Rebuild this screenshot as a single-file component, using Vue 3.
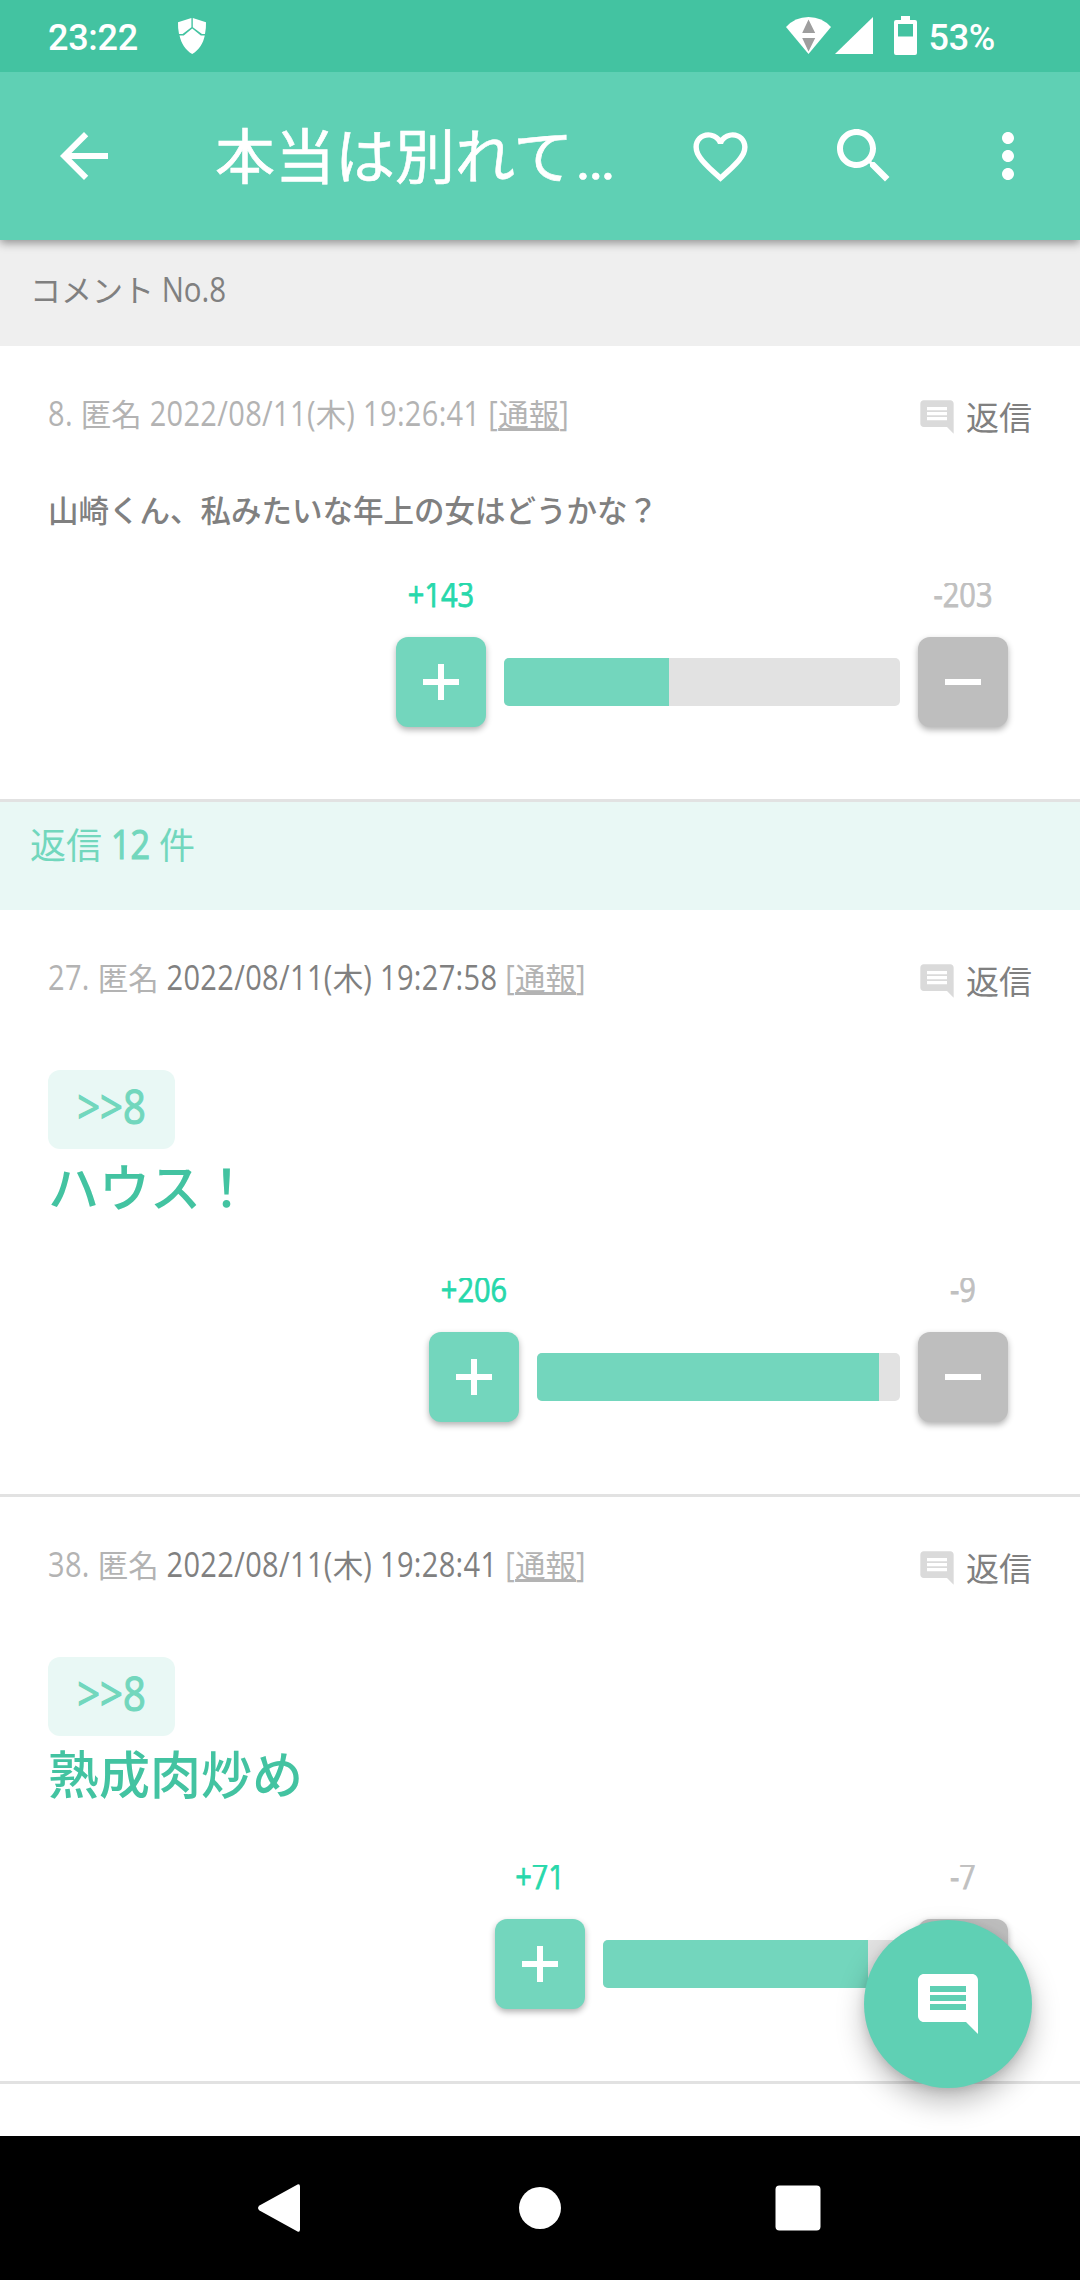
<template>
  <div class="screen">
    <div class="status-bar">
      <span class="clock">23:22</span>
      <svg class="shield" viewBox="0 0 28 36">
        <path d="M13.4 0L0 4.3Q-.2 10.500 1 16H4.600L13.400 9.200ZM14.800 0L28 4.300Q28.200 10.500 27 16H24L14.800 9.200Z" />
        <path d="M14.200 10.600L5.800 17.400H1.500C3.200 25.200 7.400 32 14.200 36C21 32 25.200 25.200 26.800 17.400H22.800Z" />
      </svg>
      <div class="status-right">
        <svg class="wifi" viewBox="0 0 45 37">
          <path d="M0 10Q9 0 22.500 0T45 10L22.500 37Z" />
          <path d="M22.500 2.500L29.200 16H16.200ZM16.200 21H29.200L22.500 34.500Z" fill="#9e9e9e" />
        </svg>
        <svg class="signal" viewBox="0 0 38 37">
          <path d="M38 0V37H0Z" />
        </svg>
        <svg class="battery" viewBox="0 0 23 39">
          <path fill-rule="evenodd" d="M7 0H16V4H21Q23 4 23 6V37Q23 39 21 39H2Q0 39 0 37V6Q0 4 2 4H7ZM4 8V20.500H19V8Z" />
        </svg>
        <span class="percent">53%</span>
      </div>
    </div>

    <header class="app-bar">
      <svg class="icon back" viewBox="0 0 24 24">
        <path d="M20 11H7.830l5.590-5.590L12 4l-8 8 8 8 1.410-1.410L7.830 13H20v-2z" />
      </svg>
      <h1>本当は別れて<span class="dots">…</span></h1>
      <svg class="heart" viewBox="0 0 24 24">
        <path d="M16.500 3c-1.740 0-3.410.81-4.500 2.090C10.910 3.810 9.240 3 7.500 3 4.420 3 2 5.420 2 8.500c0 3.780 3.400 6.860 8.550 11.540L12 21.350l1.450-1.320C18.600 15.360 22 12.280 22 8.500 22 5.420 19.580 3 16.500 3zm-4.400 15.550l-.1.100-.1-.1C7.140 14.240 4 11.390 4 8.500 4 6.500 5.500 5 7.500 5c1.540 0 3.040.99 3.570 2.360h1.870C13.460 5.990 14.960 5 16.500 5c2 0 3.500 1.500 3.500 3.500 0 2.890-3.140 5.740-7.900 10.050z" />
      </svg>
      <svg class="icon search" viewBox="0 0 24 24">
        <path d="M15.500 14h-.79l-.28-.27C15.410 12.590 16 11.110 16 9.500 16 5.910 13.090 3 9.500 3S3 5.910 3 9.500 5.910 16 9.500 16c1.610 0 3.090-.59 4.230-1.570l.27.28v.79l5 4.990L20.490 19l-4.990-5zm-6 0C7.010 14 5 11.990 5 9.500S7.010 5 9.500 5 14 7.010 14 9.500 11.990 14 9.500 14z" />
      </svg>
      <svg class="icon more" viewBox="0 0 24 24">
        <path d="M12 8c1.100 0 2-.9 2-2s-.9-2-2-2-2 .9-2 2 .9 2 2 2zm0 2c-1.100 0-2 .9-2 2s.9 2 2 2 2-.9 2-2-.9-2-2-2zm0 6c-1.100 0-2 .9-2 2s.9 2 2 2 2-.9 2-2-.9-2-2-2z" />
      </svg>
    </header>

    <div class="section">コメント<span class="n"> No.8</span></div>

    <main>
      <template v-for="(c, i) in comments" :key="c.id">
        <article class="comment">
          <div class="comment-head">
            <div class="meta">
              <span class="n">{{ c.id + '. ' }}</span>匿名<span class="date" :class="{ dark: i > 0 }"><span class="n">{{ ' ' + c.date + '(' }}</span>木<span class="n">{{ ') ' + c.time }}</span></span><span class="n">{{ ' [' }}</span><a class="report">通報</a><span class="n">]</span>
            </div>
            <a class="reply">
              <svg viewBox="0 0 24 24">
                <path :d="commentPath" />
              </svg>
              <span>返信</span>
            </a>
          </div>

          <div v-if="c.replyTo" class="anchor"><span class="n">>>{{ c.replyTo }}</span></div>
          <p class="body" :class="{ large: c.replyTo }">{{ c.text }}</p>

          <div class="votes">
            <div class="vote">
              <div class="count plus-count"><span class="n">+{{ c.plus }}</span></div>
              <button class="vote-btn plus">
                <svg viewBox="0 0 36 36"><path d="M15 0h6v15h15v6H21v15h-6V21H0v-6h15z" /></svg>
              </button>
            </div>
            <div class="bar" :style="{ width: c.bar + 'px' }">
              <div class="fill" :style="{ width: c.fill + 'px' }"></div>
            </div>
            <div class="vote">
              <div class="count minus-count"><span class="n">-{{ c.minus }}</span></div>
              <button class="vote-btn minus">
                <svg viewBox="0 0 36 36"><path d="M0 15h36v6H0z" /></svg>
              </button>
            </div>
          </div>
        </article>
        <div v-if="i === 0" class="section replies">返信<span class="n">{{ ' 12 ' }}</span>件</div>
      </template>
    </main>

    <button class="fab">
      <svg viewBox="0 0 24 24"><path :d="commentPath" /></svg>
    </button>

    <nav class="nav-bar">
      <svg viewBox="0 0 48 48"><path d="M39.500 .5Q42 -.5 42 2.500V45.500Q42 48.500 39.500 47.500L1.500 26.500Q-1.500 24 1.500 21.500Z" /></svg>
      <svg viewBox="0 0 48 48"><circle cx="24" cy="24" r="21" /></svg>
      <svg viewBox="0 0 48 48"><rect x="1.500" y="1.500" width="45" height="45" rx="4" /></svg>
    </nav>
  </div>
</template>

<script setup>
const commentPath =
  'M21.990 4c0-1.100-.89-2-1.990-2H4c-1.100 0-2 .9-2 2v12c0 1.100.9 2 2 2h14l4 4-.01-18zM18 14H6v-2h12v2zm0-3H6V9h12v2zm0-3H6V6h12v2z'

// bar and fill are pixel widths, popular comments get a longer bar
const comments = [
  { id: 8, date: '2022/08/11', time: '19:26:41', text: '山崎くん、私みたいな年上の女はどうかな？', plus: 143, minus: 203, bar: 396, fill: 165 },
  { id: 27, date: '2022/08/11', time: '19:27:58', replyTo: 8, text: 'ハウス！', plus: 206, minus: 9, bar: 363, fill: 342 },
  { id: 38, date: '2022/08/11', time: '19:28:41', replyTo: 8, text: '熟成肉炒め', plus: 71, minus: 7, bar: 297, fill: 265 },
]
</script>

<style>
body {
  margin: 0;
  background: #fff;
}
</style>

<style scoped>
.screen {
  position: relative;
  display: flex;
  flex-direction: column;
  width: 1080px;
  height: 2280px;
  overflow: hidden;
  background: #fff;
  font-family: 'Noto Sans CJK JP', sans-serif;
  color: #808080;
}

svg {
  display: block;
  fill: currentColor;
  flex: none;
  overflow: visible;
}

/* tall latin glyphs, stretched up from the baseline */
.n {
  display: inline-block;
  font-family: 'Open Sans', 'Noto Sans', sans-serif;
  font-size: 0.95em;
  white-space: pre;
  transform: scaleY(1.18);
  transform-origin: 0 calc(50% + 0.388em);
}

.status-bar {
  position: relative;
  z-index: 2;
  display: flex;
  align-items: flex-start;
  height: 72px;
  flex: none;
  box-sizing: border-box;
  padding: 17px 85px 0 48px;
  background: #43c3a1;
  color: #fff;
  font: 500 36px/42px Roboto, sans-serif;
  letter-spacing: -0.3px;
}

.shield {
  width: 28px;
  height: 36px;
  margin: 1px 0 0 40px;
}

.status-right {
  display: flex;
  margin-left: auto;
}

.wifi {
  width: 45px;
  height: 37px;
}

.signal {
  width: 38px;
  height: 37px;
  margin: 0 0 0 4px;
}

.battery {
  width: 23px;
  height: 39px;
  margin: -1px 0 0 21px;
}

.percent {
  margin-left: 11px;
}

.app-bar {
  position: relative;
  z-index: 1;
  display: flex;
  align-items: center;
  height: 168px;
  flex: none;
  background: #5fd0b4;
  color: #fff;
  box-shadow: 0 3px 9px rgba(0, 0, 0, 0.4);
}

.icon {
  width: 72px;
  height: 72px;
}

.back {
  margin-left: 48px;
}

.app-bar h1 {
  width: 401px;
  margin: 0 0 0 95px;
  font-size: 60px;
  font-weight: 400;
  line-height: 80px;
  white-space: nowrap;
  -webkit-text-stroke: 0.6px currentColor;
}

.dots {
  margin-left: 2px;
  font-family: Roboto, sans-serif;
}

.heart {
  width: 65px;
  height: 65px;
  margin-left: 72px;
}

.search {
  margin-left: 75px;
}

.more {
  margin-left: 72px;
}

.section {
  height: 106px;
  flex: none;
  box-sizing: border-box;
  padding: 27px 30px 0;
  background: #efefef;
  font-size: 31px;
  line-height: 44px;
}

.replies {
  height: 108px;
  padding-top: 19px;
  background: #e9f8f5;
  color: #72d7bd;
  font-size: 36px;
}

.replies .n,
.anchor .n {
  -webkit-text-stroke: 1px currentColor;
}

.comment {
  display: flex;
  flex-direction: column;
  height: 587px;
  box-sizing: border-box;
  border-bottom: 3px solid #e2e2e2;
}

.comment:first-child {
  height: 456px;
}

.comment-head {
  display: flex;
  justify-content: space-between;
  height: 44px;
  flex: none;
  padding: 45px 48px 0;
}

.meta {
  font-size: 30.500px;
  line-height: 44px;
  color: #b3b3b3;
  white-space: nowrap;
}

.meta .n {
  letter-spacing: 0.35px;
}

.dark {
  color: #808080;
}

.report {
  text-decoration: underline;
  text-decoration-thickness: 3px;
  text-underline-offset: 2px;
}

.reply {
  display: flex;
  align-items: center;
  height: 48px;
  margin-top: 2px;
  font-size: 33px;
  line-height: 48px;
}

.reply span {
  padding-bottom: 3px;
}

.reply svg {
  width: 40px;
  height: 40px;
  margin-right: 9px;
  color: #dadada;
}

.body {
  margin: 52px 48px 0;
  font-size: 30.500px;
  font-weight: 500;
  line-height: 44px;
}

.anchor {
  align-self: flex-start;
  width: 127px;
  height: 79px;
  margin: 71px 0 0 48px;
  border-radius: 12px;
  background: #e9f8f5;
  color: #72d7bd;
  font-size: 42px;
  line-height: 72px;
  text-align: center;
}

.body.large {
  margin-top: 0;
  font-size: 51px;
  line-height: 72px;
  color: #43c3a1;
}

.votes {
  display: flex;
  align-items: flex-end;
  justify-content: flex-end;
  gap: 18px;
  margin-top: auto;
  padding: 0 72px 72px 0;
}

.vote {
  width: 90px;
}

/* numbers are slightly taller than the row */
.count {
  height: 40px;
  margin-bottom: 14px;
  clip-path: inset(0);
  font-size: 30.500px;
  line-height: 22px;
  text-align: center;
  -webkit-text-stroke: 0.7px currentColor;
}

.plus-count {
  color: #27d8ab;
}

.minus-count {
  color: #c0c0c0;
}

.vote-btn {
  display: flex;
  align-items: center;
  justify-content: center;
  width: 90px;
  height: 90px;
  padding: 0;
  border: 0;
  border-radius: 12px;
  color: #fff;
  box-shadow: 0 3px 6px rgba(0, 0, 0, 0.3);
}

.vote-btn svg {
  width: 36px;
  height: 36px;
}

.plus {
  background: #73d6bd;
}

.minus {
  background: #bebebe;
}

.bar {
  height: 48px;
  margin-bottom: 21px;
  border-radius: 5px;
  overflow: hidden;
  background: #e2e2e2;
}

.fill {
  height: 100%;
  background: #73d6bd;
}

.fab {
  position: absolute;
  right: 48px;
  bottom: 192px;
  display: flex;
  align-items: center;
  justify-content: center;
  width: 168px;
  height: 168px;
  padding: 0;
  border: 0;
  border-radius: 50%;
  background: #5fd0b4;
  color: #fff;
  box-shadow: 0 14px 28px rgba(0, 0, 0, 0.26), 0 3px 10px rgba(0, 0, 0, 0.12);
}

.fab svg {
  width: 72px;
  height: 72px;
}

.nav-bar {
  display: flex;
  align-items: center;
  justify-content: center;
  gap: 210px;
  height: 144px;
  flex: none;
  margin-top: auto;
  background: #000;
  color: #fff;
}

.nav-bar svg {
  width: 48px;
  height: 48px;
}
</style>
